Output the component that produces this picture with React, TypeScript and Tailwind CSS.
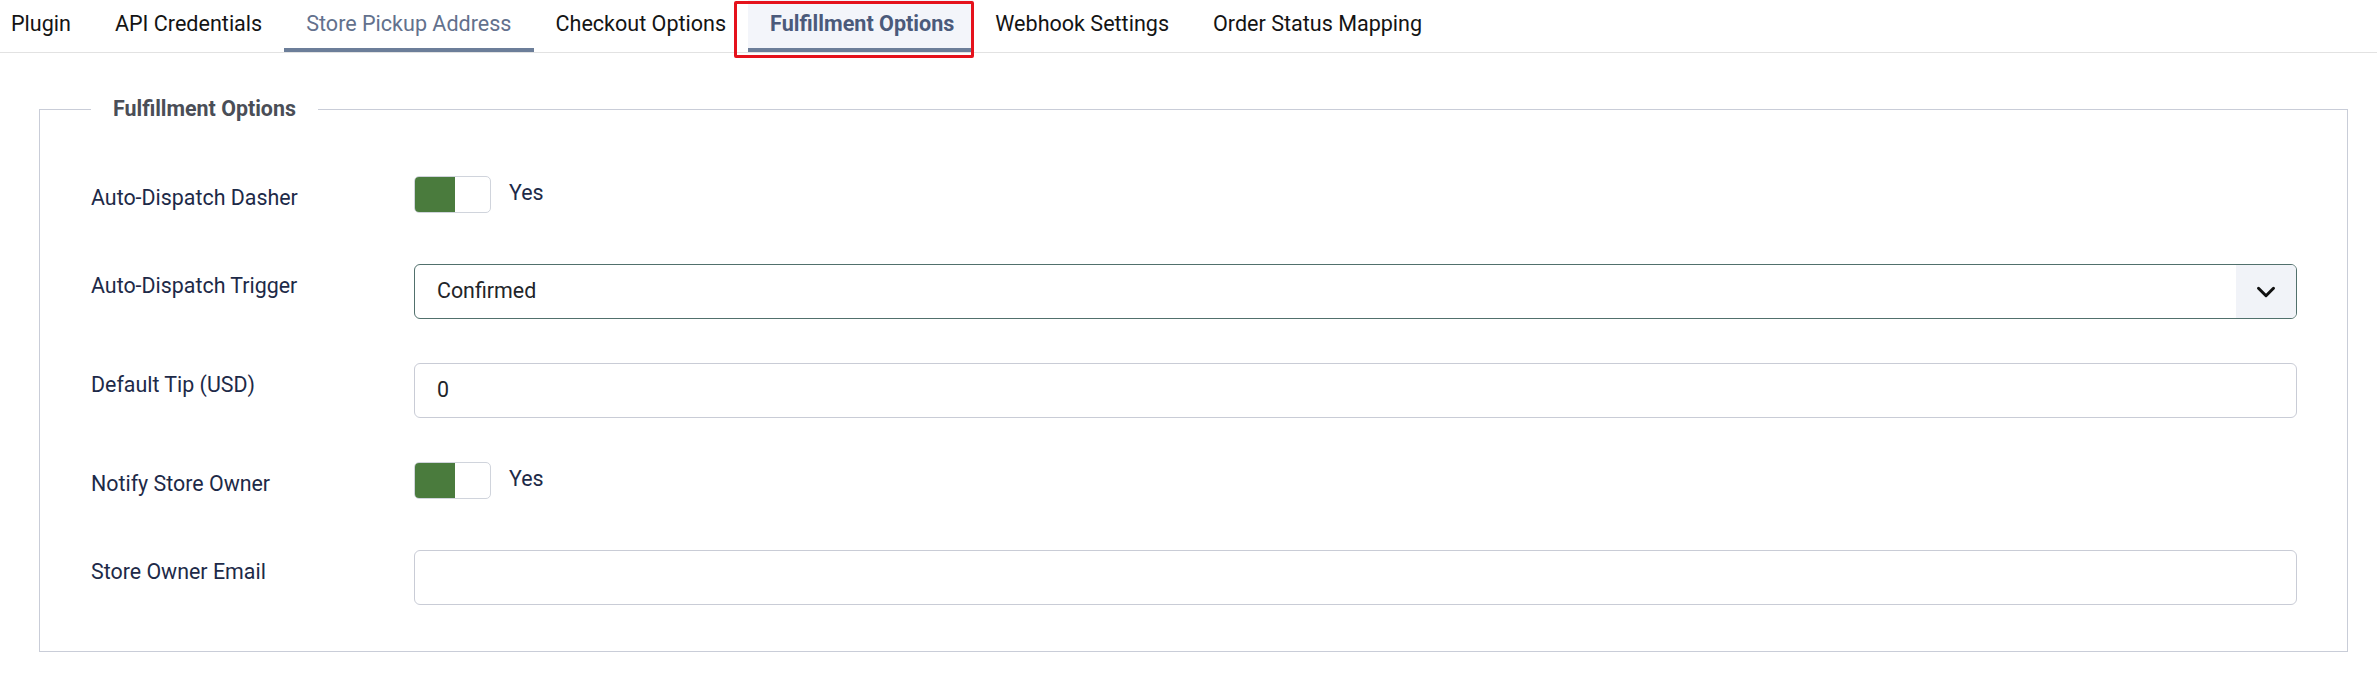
import { ChevronDown } from 'lucide-react';

const tabs = [
    { name: 'Plugin', state: 'idle' },
    { name: 'API Credentials', state: 'idle' },
    { name: 'Store Pickup Address', state: 'hover' },
    { name: 'Checkout Options', state: 'idle' },
    { name: 'Fulfillment Options', state: 'active' },
    { name: 'Webhook Settings', state: 'idle' },
    { name: 'Order Status Mapping', state: 'idle' },
];

function Toggle({ on }: { on: boolean }) {
    return (
        <div className="flex h-[44px] items-start">
            <div className="w-[77px] h-[37px] rounded-[5px] border border-[#d0d4dc] bg-white overflow-hidden flex">
                {on && <div className="w-[40px] h-full bg-[#4a7b3d]"></div>}
            </div>
            <span className="ml-[18px] leading-[32px] text-[#1d2a48] mt-[1px]">Yes</span>
        </div>
    );
}

function Row({ label, children }: { label: string; children: React.ReactNode }) {
    return (
        <div className="flex items-start">
            <div className="w-[323px] shrink-0 pt-[6px] leading-[32px] text-[#1d2a48]">{label}</div>
            <div className="flex-1">{children}</div>
        </div>
    );
}

export default function App() {
    return (
        <div className="min-h-screen bg-white font-['Roboto',sans-serif] text-[21.4px]">
            {/* Tab bar */}
            <nav className="flex h-[53px] border-b border-[#e2e2e2] -ml-[11px] text-[21.55px]">
                {tabs.map((tab) => (
                    <div
                        key={tab.name}
                        className={`relative h-[52px] px-[22px] flex items-center border-b-4 leading-none ${tab.state === 'active'
                                ? 'bg-[#f3f5fa] border-[#6c7e99] font-bold text-[#4b5a7b] pr-[19px]'
                                : tab.state === 'hover'
                                    ? 'border-[#6c7e99] text-[#63718d]'
                                    : 'border-transparent text-[#141414]'
                            }`}
                    >
                        {tab.name}
                        {tab.state === 'active' && (
                            <div className="absolute -left-[14px] -right-[1px] top-px -bottom-[10px] border-[3px] border-[#e5121c] rounded-[2px] z-10"></div>
                        )}
                    </div>
                ))}
            </nav>

            <fieldset className="ml-[39px] mr-[29px] mt-[40px] border border-[#c9cdd8] pl-[51px] pr-[50px] pt-[51px] pb-[46px]">
                <legend className="px-[22px] leading-[32px] font-bold text-[#4a4e57]">Fulfillment Options</legend>

                <div className="flex flex-col gap-[44px]">
                    <Row label="Auto-Dispatch Dasher">
                        <Toggle on />
                    </Row>

                    <Row label="Auto-Dispatch Trigger">
                        <div className="h-[55px] rounded-[6px] border border-[#51706c] flex items-center overflow-hidden">
                            <span className="flex-1 pl-[22px] text-[#222529]">Confirmed</span>
                            <div className="w-[60px] h-full bg-[#f1f3f8] flex items-center justify-center">
                                <ChevronDown className="w-[30px] h-[30px] text-[#111]" strokeWidth={2.4} />
                            </div>
                        </div>
                    </Row>

                    <Row label="Default Tip (USD)">
                        <div className="h-[55px] rounded-[6px] border border-[#c9ccd6] flex items-center px-[22px] text-[#222529]">
                            0
                        </div>
                    </Row>

                    <Row label="Notify Store Owner">
                        <Toggle on />
                    </Row>

                    <Row label="Store Owner Email">
                        <div className="h-[55px] rounded-[6px] border border-[#c9ccd6]"></div>
                    </Row>
                </div>
            </fieldset>
        </div>
    );
}
